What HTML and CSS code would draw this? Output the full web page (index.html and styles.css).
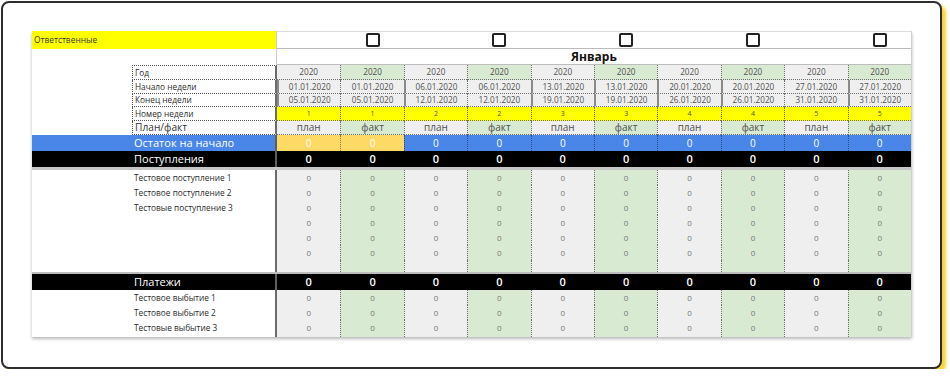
FILE: index.html
```html
<!DOCTYPE html>
<html lang="ru">
<head>
<meta charset="utf-8">
<title>Платёжный календарь</title>
<link rel="stylesheet" href="styles.css">
</head>
<body>
<div class="card">
  <div class="sheet">
    <div class="row r-resp">
      <div class="wide resp">Ответственные</div>
      <div class="p first"></div><div class="f"><span class="cb"></span></div>
      <div class="p"></div><div class="f"><span class="cb"></span></div>
      <div class="p"></div><div class="f"><span class="cb"></span></div>
      <div class="p"></div><div class="f"><span class="cb"></span></div>
      <div class="p"></div><div class="f"><span class="cb"></span></div>
    </div>
    <div class="row r-month">
      <div class="a"></div><div class="lbl"></div>
      <div class="month">Январь</div>
    </div>
    <div class="row r-year">
      <div class="a"></div><div class="lbl">Год</div>
      <div class="p first">2020</div><div class="f">2020</div>
      <div class="p">2020</div><div class="f">2020</div>
      <div class="p">2020</div><div class="f">2020</div>
      <div class="p">2020</div><div class="f">2020</div>
      <div class="p">2020</div><div class="f">2020</div>
    </div>
    <div class="row r-date r-start">
      <div class="a"></div><div class="lbl">Начало недели</div>
      <div class="p first tk">01.01.2020</div><div class="f">01.01.2020</div>
      <div class="p tk">06.01.2020</div><div class="f">06.01.2020</div>
      <div class="p tk">13.01.2020</div><div class="f tk">13.01.2020</div>
      <div class="p tk">20.01.2020</div><div class="f tk">20.01.2020</div>
      <div class="p">27.01.2020</div><div class="f tk">27.01.2020</div>
    </div>
    <div class="row r-date r-end">
      <div class="a"></div><div class="lbl">Конец недели</div>
      <div class="p first tk">05.01.2020</div><div class="f">05.01.2020</div>
      <div class="p tk">12.01.2020</div><div class="f">12.01.2020</div>
      <div class="p tk">19.01.2020</div><div class="f tk">19.01.2020</div>
      <div class="p tk">26.01.2020</div><div class="f tk">26.01.2020</div>
      <div class="p">31.01.2020</div><div class="f tk">31.01.2020</div>
    </div>
    <div class="row r-week">
      <div class="a"></div><div class="lbl">Номер недели</div>
      <div class="p first">1</div><div class="f">1</div>
      <div class="p">2</div><div class="f">2</div>
      <div class="p">3</div><div class="f">3</div>
      <div class="p">4</div><div class="f">4</div>
      <div class="p">5</div><div class="f">5</div>
    </div>
    <div class="row r-pf">
      <div class="a"></div><div class="lbl">План/факт</div>
      <div class="p first">план</div><div class="f">факт</div>
      <div class="p">план</div><div class="f">факт</div>
      <div class="p">план</div><div class="f">факт</div>
      <div class="p">план</div><div class="f">факт</div>
      <div class="p">план</div><div class="f">факт</div>
    </div>
    <div class="row r-rest">
      <div class="wide head">Остаток на начало</div>
      <div class="p first hl">0</div><div class="f hl">0</div>
      <div class="p">0</div><div class="f">0</div>
      <div class="p">0</div><div class="f">0</div>
      <div class="p">0</div><div class="f">0</div>
      <div class="p">0</div><div class="f">0</div>
    </div>
    <div class="row r-total">
      <div class="wide head">Поступления</div>
      <div class="p first">0</div><div class="f">0</div>
      <div class="p">0</div><div class="f">0</div>
      <div class="p">0</div><div class="f">0</div>
      <div class="p">0</div><div class="f">0</div>
      <div class="p">0</div><div class="f">0</div>
    </div>
    <div class="sep sep-3"></div>
    <div class="row r-data">
      <div class="a"></div><div class="lbl">Тестовое поступление 1</div>
      <div class="p first">0</div><div class="f">0</div><div class="p">0</div><div class="f">0</div><div class="p">0</div><div class="f">0</div><div class="p">0</div><div class="f">0</div><div class="p">0</div><div class="f">0</div>
    </div>
    <div class="row r-data">
      <div class="a"></div><div class="lbl">Тестовое поступление 2</div>
      <div class="p first">0</div><div class="f">0</div><div class="p">0</div><div class="f">0</div><div class="p">0</div><div class="f">0</div><div class="p">0</div><div class="f">0</div><div class="p">0</div><div class="f">0</div>
    </div>
    <div class="row r-data">
      <div class="a"></div><div class="lbl">Тестовые поступление 3</div>
      <div class="p first">0</div><div class="f">0</div><div class="p">0</div><div class="f">0</div><div class="p">0</div><div class="f">0</div><div class="p">0</div><div class="f">0</div><div class="p">0</div><div class="f">0</div>
    </div>
    <div class="row r-data">
      <div class="a"></div><div class="lbl"></div>
      <div class="p first">0</div><div class="f">0</div><div class="p">0</div><div class="f">0</div><div class="p">0</div><div class="f">0</div><div class="p">0</div><div class="f">0</div><div class="p">0</div><div class="f">0</div>
    </div>
    <div class="row r-data">
      <div class="a"></div><div class="lbl"></div>
      <div class="p first">0</div><div class="f">0</div><div class="p">0</div><div class="f">0</div><div class="p">0</div><div class="f">0</div><div class="p">0</div><div class="f">0</div><div class="p">0</div><div class="f">0</div>
    </div>
    <div class="row r-data">
      <div class="a"></div><div class="lbl"></div>
      <div class="p first">0</div><div class="f">0</div><div class="p">0</div><div class="f">0</div><div class="p">0</div><div class="f">0</div><div class="p">0</div><div class="f">0</div><div class="p">0</div><div class="f">0</div>
    </div>
    <div class="row r-data r-empty">
      <div class="a"></div><div class="lbl"></div>
      <div class="p first"></div><div class="f"></div><div class="p"></div><div class="f"></div><div class="p"></div><div class="f"></div><div class="p"></div><div class="f"></div><div class="p"></div><div class="f"></div>
    </div>
    <div class="sep sep-2"></div>
    <div class="row r-total">
      <div class="wide head">Платежи</div>
      <div class="p first">0</div><div class="f">0</div>
      <div class="p">0</div><div class="f">0</div>
      <div class="p">0</div><div class="f">0</div>
      <div class="p">0</div><div class="f">0</div>
      <div class="p">0</div><div class="f">0</div>
    </div>
    <div class="row r-data">
      <div class="a"></div><div class="lbl">Тестовое выбытие 1</div>
      <div class="p first">0</div><div class="f">0</div><div class="p">0</div><div class="f">0</div><div class="p">0</div><div class="f">0</div><div class="p">0</div><div class="f">0</div><div class="p">0</div><div class="f">0</div>
    </div>
    <div class="row r-data">
      <div class="a"></div><div class="lbl">Тестовое выбытие 2</div>
      <div class="p first">0</div><div class="f">0</div><div class="p">0</div><div class="f">0</div><div class="p">0</div><div class="f">0</div><div class="p">0</div><div class="f">0</div><div class="p">0</div><div class="f">0</div>
    </div>
    <div class="row r-data r-last">
      <div class="a"></div><div class="lbl">Тестовые выбытие 3</div>
      <div class="p first">0</div><div class="f">0</div><div class="p">0</div><div class="f">0</div><div class="p">0</div><div class="f">0</div><div class="p">0</div><div class="f">0</div><div class="p">0</div><div class="f">0</div>
    </div>
  </div>
</div>
</body>
</html>
```

FILE: styles.css
```css
* { box-sizing: border-box; }

html, body {
  margin: 0;
  padding: 0;
  background: #ffffff;
}

body {
  font-family: "Open Sans", "Noto Sans", "Liberation Sans", sans-serif;
  color: #333333;
}

.card {
  margin: 1px 0 0 1px;
  width: 941px;
  height: 368px;
  border: 2px solid #2e2e2e;
  border-radius: 8px;
  background: #ffffff;
  box-shadow: 4px 4px 3px #f7d53a;
  padding: 28px 0 0 29px;
}

.sheet {
  width: 880px;
  border-right: 1px solid #cfcfcf;
  box-shadow: 0 2px 3px rgba(0, 0, 0, 0.28);
  background: #ffffff;
}

.row {
  display: grid;
  grid-template-columns: 100px 145px repeat(10, 63.4px);
}

.row > div {
  white-space: nowrap;
  overflow: hidden;
}

/* data cells */
.p, .f {
  text-align: center;
  border-left: 1px dotted #6f6f6f;
}
.first { border-left: 0; }

.lbl {
  border-right: 2px solid #6b6b6b;
  padding-left: 2px;
  font-size: 8.3px;
  color: #2b2b2b;
}

.wide {
  grid-column: span 2;
  border-right: 2px solid #5f5f5f;
}

/* row 1: responsible + checkboxes */
.r-resp { height: 18px; }
.r-resp .resp {
  background: #ffff00;
  border-right: 1px solid #cccccc;
  font-size: 8.4px;
  line-height: 18px;
  padding-left: 2px;
  color: #3a3a3a;
}
.r-resp .p, .r-resp .f {
  border-left: 0;
  border-top: 1px solid #dddddd;
  border-bottom: 1px solid #bbbbbb;
  display: flex;
  justify-content: center;
  align-items: center;
  padding-bottom: 1px;
}
.cb {
  display: block;
  width: 14px;
  height: 14px;
  border: 2px solid #222222;
  border-radius: 2px;
  margin-left: 1px;
}

/* row 2: month */
.r-month { height: 16px; }
.r-month .lbl { border-right: 1px solid #cccccc; }
.month {
  grid-column: span 10;
  text-align: center;
  font-weight: 700;
  font-size: 12px;
  line-height: 15px;
  color: #111111;
  border-bottom: 1px solid #bdbdbd;
}

/* header rows */
.r-year, .r-date, .r-week, .r-pf {
  font-size: 8.2px;
  color: #4f4f4f;
}
.r-year .lbl, .r-date .lbl, .r-week .lbl, .r-pf .lbl {
  border-left: 1px dotted #555555;
  border-bottom: 1px dotted #555555;
}
.r-year .p, .r-year .f,
.r-date .p, .r-date .f,
.r-week .p, .r-week .f,
.r-pf .p, .r-pf .f {
  border-bottom: 1px dotted #6f6f6f;
}
.r-year .lbl { border-top: 1px dotted #555555; }

.r-year { height: 15px; line-height: 13px; }
.r-year .p { background: #efefef; }
.r-year .f { background: #d9ead3; }

.r-start { height: 14px; line-height: 13px; }
.r-end { height: 13px; line-height: 12px; }
.r-date .p, .r-date .f { background: #efefef; }
.r-date .tk { border-left: 2px solid #8a8a8a; }
.r-date .first.tk { border-left: 2px solid #8a8a8a; }

.r-week { height: 14px; line-height: 13px; }
.r-week .p, .r-week .f { background: #ffff00; font-size: 7px; }

.r-pf { height: 14px; line-height: 13px; }
.r-pf .lbl { font-size: 10.2px; color: #333333; }
.r-pf .p { background: #efefef; font-size: 10px; }
.r-pf .f { background: #d9ead3; font-size: 10px; }

/* section heads */
.head {
  padding-left: 102px;
  color: #ffffff;
  font-size: 11px;
}
.r-rest { height: 16px; line-height: 16px; background: #4a86e8; color: #ffffff; font-size: 10px; }
.r-rest .p, .r-rest .f { background: #4a86e8; border-left-color: #2b4f8a; }
.r-rest .hl { background: #ffd966; border-left-color: #8a7a40; }
.r-rest .first { border-left: 0; }

.r-total { height: 16px; line-height: 16px; background: #000000; color: #ffffff; font-size: 11px; font-weight: 600; }
.r-total .head { font-weight: 400; }
.r-total .p, .r-total .f { border-left-color: #000000; }

.sep { width: 100%; }
.sep-3 { height: 3px; background: #c6c6c6; }
.sep-2 { height: 2px; background: #bdbdbd; }

/* data rows */
.r-data { height: 15px; line-height: 15px; font-size: 8px; }
.r-data .lbl { color: #2b2b2b; font-size: 8.3px; }
.r-data .p { background: #efefef; color: #777777; }
.r-data .f { background: #d9ead3; color: #777777; }
.r-empty { height: 12px; }
.r-last { height: 17px; }
```
